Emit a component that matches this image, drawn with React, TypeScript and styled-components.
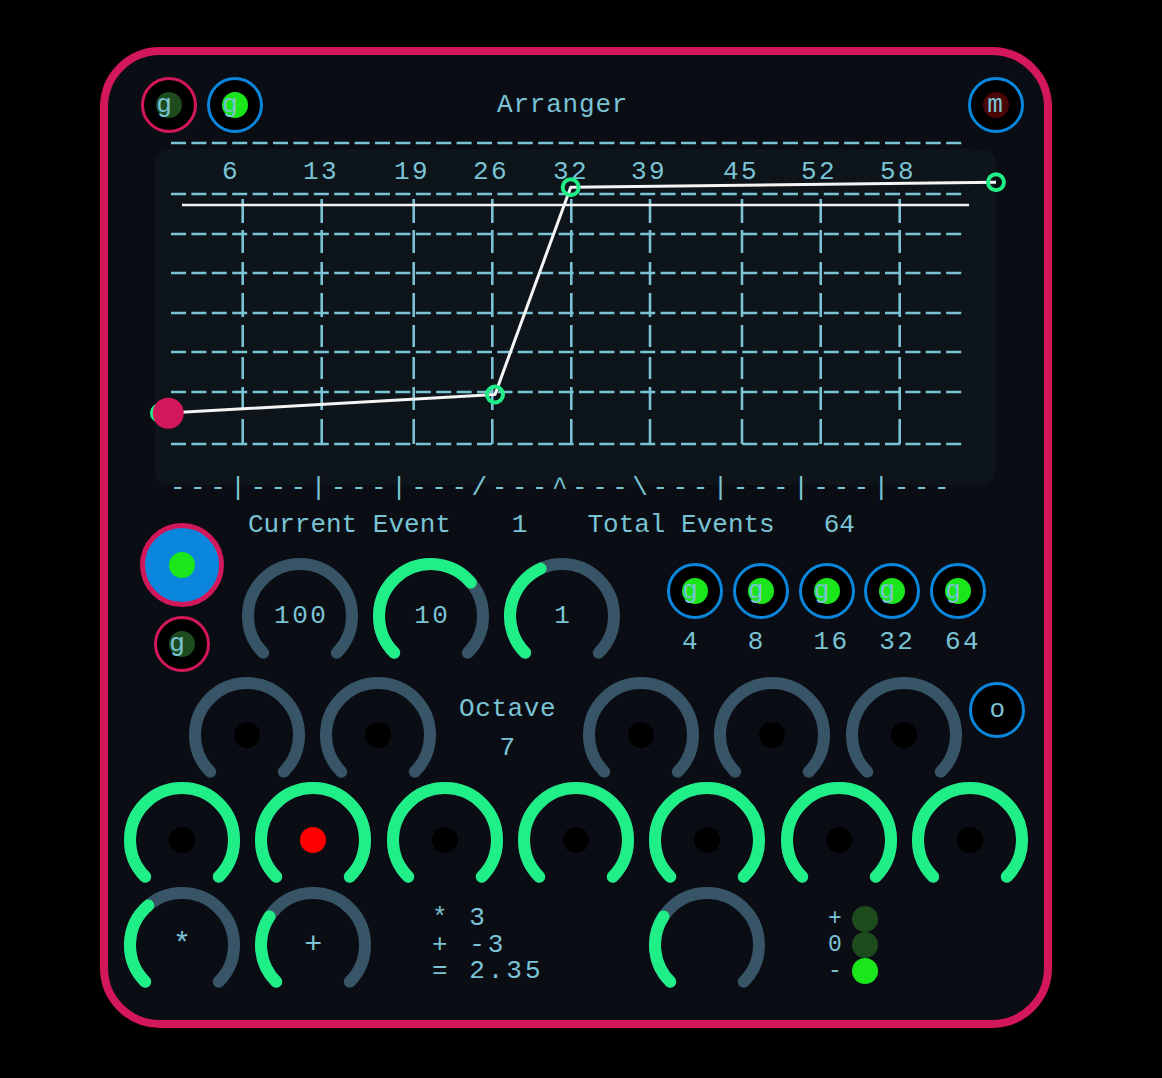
import React from 'react';
import styled, { createGlobalStyle } from 'styled-components';

const C = {
  text: '#7ac3d5',
  crimson: '#d3175b',
  blue: '#0a86dc',
  green: '#1be61b',
  darkGreen: '#1e4b1e',
  darkRed: '#4a0505',
  track: '#385567',
  knob: '#20ee86',
  panel: '#0a0e14',
  grid: '#0d141a',
};

const GlobalStyle = createGlobalStyle`
  html, body {
    margin: 0;
    padding: 0;
    background: #000;
  }
  body {
    font-family: "Liberation Mono", "DejaVu Sans Mono", monospace;
    font-size: 26px;
    color: ${C.text};
  }
`;

const Page = styled.div`
  box-sizing: border-box;
  min-height: 1078px;
  padding: 47px 0 0 100px;
  background: #000;
`;

const Panel = styled.div`
  box-sizing: border-box;
  width: 952px;
  height: 981px;
  border: 8px solid ${C.crimson};
  border-radius: 60px;
  background: ${C.panel};
  display: flex;
  flex-direction: column;
`;

const Header = styled.div`
  display: flex;
  align-items: center;
  height: 56px;
  margin-top: 22px;
  padding: 0 20px 0 33px;
  gap: 10px;
`;

const Title = styled.div`
  margin-left: 224px;
  letter-spacing: 0.8px;
  line-height: 30px;
  flex: 1;
`;

const RingButton = styled.div<{ $ring: string; $size?: number; $fill?: string; $border?: number }>`
  box-sizing: border-box;
  width: ${(p) => p.$size ?? 56}px;
  height: ${(p) => p.$size ?? 56}px;
  flex: none;
  border: ${(p) => p.$border ?? 3}px solid ${(p) => p.$ring};
  border-radius: 50%;
  background: ${(p) => p.$fill ?? '#000'};
  display: grid;
  place-items: center;

  & > * {
    grid-area: 1 / 1;
  }
`;

const Dot = styled.span<{ $color: string; $size?: number }>`
  display: block;
  width: ${(p) => p.$size ?? 26}px;
  height: ${(p) => p.$size ?? 26}px;
  border-radius: 50%;
  background: ${(p) => p.$color};
`;

const Letter = styled.span<{ $dx?: number }>`
  line-height: 1;
  transform: translateX(${(p) => p.$dx ?? 0}px);
`;

const Chart = styled.svg`
  display: block;
  margin-top: 3px;
  overflow: visible;
`;

const ChartText = styled.text<{ $spacing?: number }>`
  font-family: "Liberation Mono", "DejaVu Sans Mono", monospace;
  font-size: 26px;
  fill: ${C.text};
  letter-spacing: ${(p) => p.$spacing ?? 2.5}px;
`;

const EventSection = styled.div`
  display: flex;
  gap: 16px;
  height: 175px;
  padding-left: 32px;
`;

const SideColumn = styled.div`
  display: flex;
  flex-direction: column;
  align-items: center;
  gap: 9px;
  width: 84px;
  padding-top: 23px;
`;

const MainColumn = styled.div`
  display: flex;
  flex-direction: column;
  padding-top: 10px;
`;

const InfoLine = styled.div`
  display: flex;
  line-height: 30px;
  padding-left: 8px;
  white-space: pre;
`;

const InfoItem = styled.span<{ $ml?: number }>`
  margin-left: ${(p) => p.$ml ?? 0}px;
`;

const KnobLine = styled.div`
  display: flex;
  gap: 11px;
  margin-top: 16px;
`;

const RateGroup = styled.div`
  display: flex;
  gap: 9.75px;
  margin-left: 34px;
  padding-top: 7px;
`;

const RateItem = styled.div`
  display: flex;
  flex-direction: column;
  width: 56px;
`;

const RateLabel = styled.span`
  margin-top: 8px;
  padding-left: 15px;
  line-height: 30px;
  letter-spacing: 2.5px;
`;

const KnobRow = styled.div<{ $pad: number; $cols: number; $height: number }>`
  display: flex;
  height: ${(p) => p.$height}px;
  padding-left: ${(p) => p.$pad}px;

  & > .cells {
    display: grid;
    grid-template-columns: repeat(${(p) => p.$cols}, 131.33px);
    align-items: start;
  }
`;

const Cell = styled.div<{ $col?: number; $ml?: number; $pt?: number }>`
  grid-column: ${(p) => (p.$col ? `${p.$col}` : 'auto')};
  justify-self: ${(p) => (p.$ml !== undefined ? 'start' : 'center')};
  margin-left: ${(p) => p.$ml ?? 0}px;
  padding-top: ${(p) => p.$pt ?? 0}px;
`;

const KnobBox = styled.div`
  display: grid;
  width: 120px;
  height: 105px;

  & > * {
    grid-area: 1 / 1;
  }
`;

const KnobLabel = styled.span<{ $size?: number }>`
  align-self: start;
  justify-self: center;
  margin-top: 45px;
  padding-left: 2.5px;
  font-size: ${(p) => p.$size ?? 26}px;
  line-height: 30px;
  letter-spacing: 2.5px;
`;

const OctaveBox = styled.div`
  display: flex;
  flex-direction: column;
  align-items: center;
  padding-top: 16px;
  margin-left: -4px;
  line-height: 36px;
  letter-spacing: 0.6px;
  gap: 3px;
`;

const SideButton = styled.div`
  margin-top: 7px;
`;

const Formula = styled.div`
  line-height: 26.5px;
  letter-spacing: 3px;
  white-space: pre;
`;

const Indicator = styled.div`
  display: flex;
  flex-direction: column;
`;

const IndicatorRow = styled.div`
  display: flex;
  align-items: center;
  gap: 9.4px;
  height: 26px;
`;

const IndicatorSign = styled.span`
  width: 16px;
  font-size: 23px;
  line-height: 22px;
  text-align: center;
`;

const polar = (a: number, r = 52) => {
  const rad = (a * Math.PI) / 180;
  return [60 + r * Math.sin(rad), 60 - r * Math.cos(rad)];
};

const arc = (from: number, to: number) => {
  const [x1, y1] = polar(from);
  const [x2, y2] = polar(to);
  const large = to - from > 180 ? 1 : 0;
  return `M ${x1.toFixed(2)} ${y1.toFixed(2)} A 52 52 0 ${large} 1 ${x2.toFixed(2)} ${y2.toFixed(2)}`;
};

const Knob: React.FC<{ value?: number; label?: string; labelSize?: number; dot?: string }> = ({
  value = 0,
  label,
  labelSize,
  dot,
}) => {
  const end = -135 + 270 * value;
  return (
    <KnobBox>
      <svg width="120" height="105" viewBox="0 0 120 105">
        <path d={arc(-135, 135)} stroke={C.track} strokeWidth="12" strokeLinecap="round" fill="none" />
        {value > 0 && (
          <path d={arc(-135, end)} stroke={C.knob} strokeWidth="12" strokeLinecap="round" fill="none" />
        )}
        {dot && <circle cx="60" cy="60" r="13" fill={dot} />}
      </svg>
      {label && <KnobLabel $size={labelSize}>{label}</KnobLabel>}
    </KnobBox>
  );
};

const GButton: React.FC<{ ring: string; dot: string; letter?: string; dx?: number }> = ({
  ring,
  dot,
  letter = 'g',
  dx = -5,
}) => (
  <RingButton $ring={ring}>
    <Dot $color={dot} />
    <Letter $dx={dx}>{letter}</Letter>
  </RingButton>
);

const columns = [134.7, 213.7, 305.7, 384.3, 463.3, 542, 634, 712.7, 791.7];
const labels = [
  { x: 122, t: '6' },
  { x: 212, t: '13' },
  { x: 303, t: '19' },
  { x: 382, t: '26' },
  { x: 462, t: '32' },
  { x: 540, t: '39' },
  { x: 632, t: '45' },
  { x: 710, t: '52' },
  { x: 789, t: '58' },
];
const dashRows = [58, 98, 137, 177, 216, 256, 308];
const barCells: [number, number][] = [
  [63, 87],
  [94, 117],
  [126, 149],
  [157, 181],
  [189, 211],
  [221, 243],
  [251, 274],
  [283, 308],
];

const ArrangerChart = () => (
  <Chart width="936" height="364" viewBox="0 0 936 364">
    <line x1="63" y1="7" x2="858" y2="7" stroke={C.text} strokeWidth="2.6" strokeDasharray="15 5.4" />
    <rect x="47" y="13" width="841" height="336" rx="14" fill={C.grid} />
    {labels.map((l) => (
      <ChartText key={l.t} x={l.x + 1} y="43" textAnchor="middle">
        {l.t}
      </ChartText>
    ))}
    {dashRows.map((y) => (
      <line key={y} x1="63" y1={y} x2="858" y2={y} stroke={C.text} strokeWidth="2.6" strokeDasharray="15 5.4" />
    ))}
    {columns.map((x) =>
      barCells.map(([a, b]) => (
        <line key={`${x}-${a}`} x1={x} y1={a} x2={x} y2={b} stroke={C.text} strokeWidth="2.6" />
      )),
    )}
    <line x1="74" y1="69" x2="861" y2="69" stroke="#f2f2f2" strokeWidth="2.4" />
    <ChartText x="62" y="359" $spacing={4.5}>
      {'---|---|---|---/---^---\\---|---|---|---'}
    </ChartText>
    <polyline
      points="60,277 387,258.5 462.7,51.3 888,46.3"
      fill="none"
      stroke="#f4f4f4"
      strokeWidth="3"
      strokeLinejoin="round"
    />
    {[
      [52, 277],
      [387, 258.5],
      [462.7, 51.3],
      [888, 46.3],
    ].map(([x, y]) => (
      <circle key={x} cx={x} cy={y} r="8" fill="none" stroke={C.knob} strokeWidth="4" />
    ))}
    <circle cx="60.3" cy="277.3" r="15.5" fill={C.crimson} />
  </Chart>
);

const rates = ['4', '8', '16', '32', '64'];

export default function App() {
  return (
    <>
      <GlobalStyle />
      <Page>
        <Panel>
          <Header>
            <GButton ring={C.crimson} dot={C.darkGreen} />
            <GButton ring={C.blue} dot={C.green} />
            <Title>Arranger</Title>
            <GButton ring={C.blue} dot={C.darkRed} letter="m" dx={-1} />
          </Header>

          <ArrangerChart />

          <EventSection>
            <SideColumn>
              <RingButton $ring={C.crimson} $fill={C.blue} $size={84} $border={5}>
                <Dot $color={C.green} />
              </RingButton>
              <GButton ring={C.crimson} dot={C.darkGreen} />
            </SideColumn>
            <MainColumn>
              <InfoLine>
                <InfoItem>Current Event</InfoItem>
                <InfoItem $ml={61}>1</InfoItem>
                <InfoItem $ml={60}>Total Events</InfoItem>
                <InfoItem $ml={49}>64</InfoItem>
              </InfoLine>
              <KnobLine>
                <Knob label="100" />
                <Knob value={0.685} label="10" />
                <Knob value={0.41} label="1" />
                <RateGroup>
                  {rates.map((r) => (
                    <RateItem key={r}>
                      <GButton ring={C.blue} dot={C.green} />
                      <RateLabel>{r}</RateLabel>
                    </RateItem>
                  ))}
                </RateGroup>
              </KnobLine>
            </MainColumn>
          </EventSection>

          <KnobRow $pad={73.3} $cols={6} $height={105}>
            <div className="cells">
              <Cell>
                <Knob dot="#000" />
              </Cell>
              <Cell>
                <Knob dot="#000" />
              </Cell>
              <Cell>
                <OctaveBox>
                  <span>Octave</span>
                  <span>7</span>
                </OctaveBox>
              </Cell>
              <Cell>
                <Knob dot="#000" />
              </Cell>
              <Cell>
                <Knob dot="#000" />
              </Cell>
              <Cell>
                <Knob dot="#000" />
              </Cell>
            </div>
            <SideButton>
              <GButton ring={C.blue} dot="transparent" letter="o" dx={0} />
            </SideButton>
          </KnobRow>

          <KnobRow $pad={8.3} $cols={7} $height={105}>
            <div className="cells">
              {[0, 1, 2, 3, 4, 5, 6].map((i) => (
                <Cell key={i}>
                  <Knob value={1} dot={i === 1 ? '#ff0000' : '#000'} />
                </Cell>
              ))}
            </div>
          </KnobRow>

          <KnobRow $pad={8.3} $cols={7} $height={105}>
            <div className="cells">
              <Cell $col={1}>
                <Knob value={0.35} label="*" labelSize={30} />
              </Cell>
              <Cell $col={2}>
                <Knob value={0.29} label="+" labelSize={30} />
              </Cell>
              <Cell $col={3} $ml={53} $pt={20}>
                <Formula>
                  {'* 3\n+ -3\n= 2.35'}
                </Formula>
              </Cell>
              <Cell $col={5}>
                <Knob value={0.29} />
              </Cell>
              <Cell $col={6} $ml={54} $pt={21}>
                <Indicator>
                  <IndicatorRow>
                    <IndicatorSign>+</IndicatorSign>
                    <Dot $color={C.darkGreen} />
                  </IndicatorRow>
                  <IndicatorRow>
                    <IndicatorSign>0</IndicatorSign>
                    <Dot $color={C.darkGreen} />
                  </IndicatorRow>
                  <IndicatorRow>
                    <IndicatorSign>-</IndicatorSign>
                    <Dot $color={C.green} />
                  </IndicatorRow>
                </Indicator>
              </Cell>
            </div>
          </KnobRow>
        </Panel>
      </Page>
    </>
  );
}
